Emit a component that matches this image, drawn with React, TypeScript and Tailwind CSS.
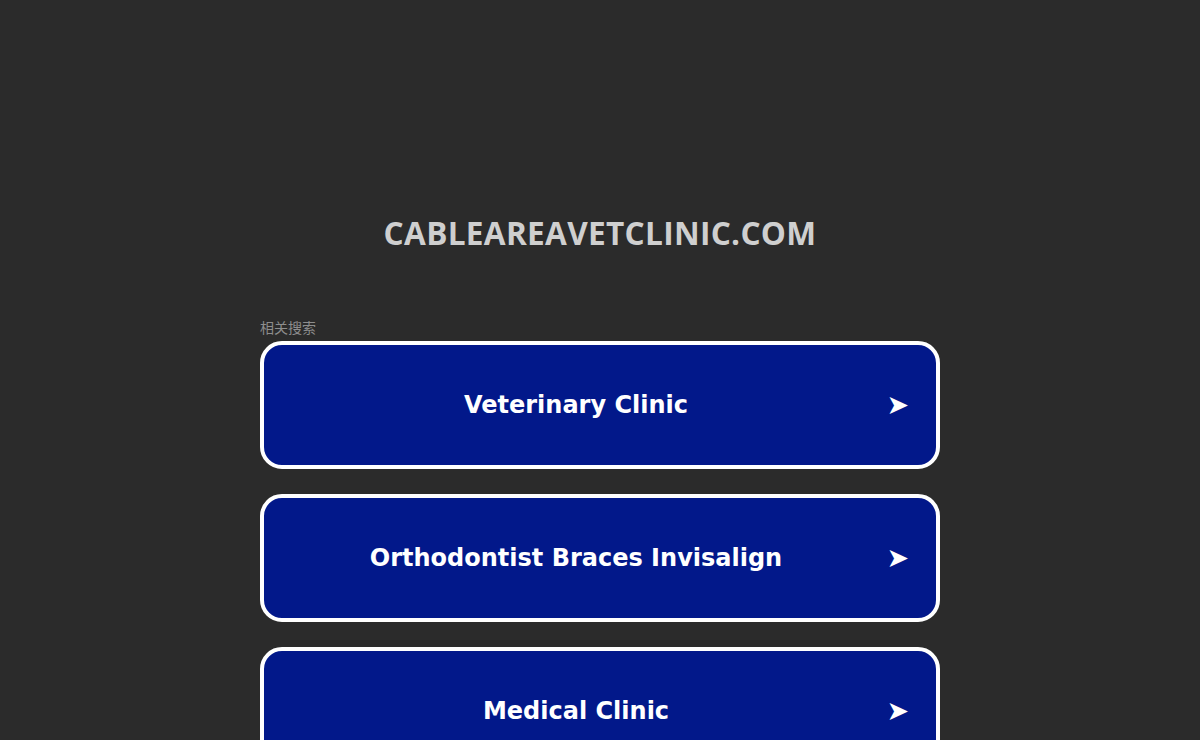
import React from 'react';

const LINKS = ['Veterinary Clinic', 'Orthodontist Braces Invisalign', 'Medical Clinic'];

export default function App() {
  return (
    <div className="min-h-[740px] h-[740px] overflow-hidden bg-[#2b2b2b]">
      <div className="pt-[212px] text-center">
        <h1 className="text-[31.6px] font-bold tracking-[0.3px] text-[#cfcfcf] leading-[42px] [font-family:'Open_Sans',sans-serif]">
          CABLEAREAVETCLINIC.COM
        </h1>
      </div>
      <div className="mx-auto mt-[65px] w-[680px]">
        <div className="text-[14px] leading-[16px] text-[#8d8d8d] [font-family:'Noto_Sans_CJK_SC',sans-serif]">相关搜索</div>
        <div className="mt-[6px] flex flex-col gap-[25px]">
          {LINKS.map((label) => (
            <a
              key={label}
              href="#"
              className="relative flex h-[128px] items-center justify-center rounded-[22px] border-4 border-white bg-[#02188a] text-white"
            >
              <span className="mr-[48px] text-[24px] font-bold [font-family:'DejaVu_Sans',Verdana,sans-serif]">{label}</span>
              <span className="absolute right-[27px] top-1/2 -translate-y-1/2 text-[27px] [font-family:'DejaVu_Sans',sans-serif]">➤</span>
            </a>
          ))}
        </div>
      </div>
    </div>
  );
}
